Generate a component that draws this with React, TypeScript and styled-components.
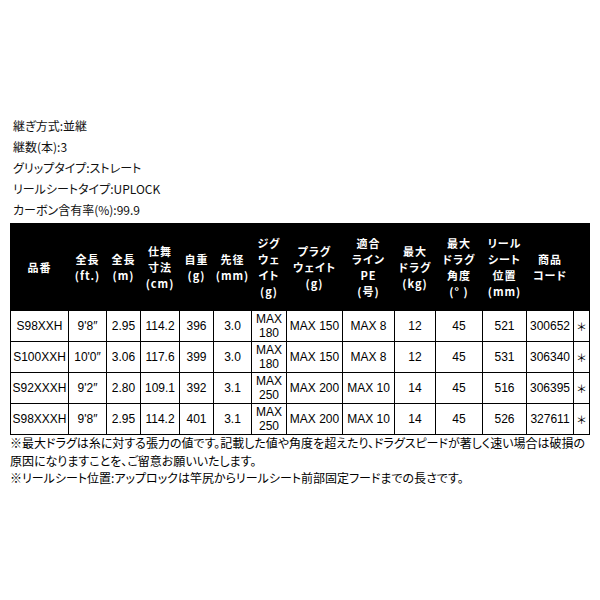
import React from "react";
import styled, { createGlobalStyle } from "styled-components";

const GlobalStyle = createGlobalStyle`
  html, body { margin: 0; padding: 0; background: #ffffff; }
  body { font-family: "Noto Sans CJK JP", "Liberation Sans", sans-serif; color: #000; }
`;

const Page = styled.div`
  width: 600px;
  height: 600px;
  box-sizing: border-box;
  padding: 115px 11px 0 10px;
  display: flex;
  flex-direction: column;
`;

const SpecList = styled.div`
  display: flex;
  flex-direction: column;
  padding-left: 3px;
  margin-bottom: 3px;
`;

const SpecLine = styled.div`
  font-size: 12px;
  line-height: 21px;
  height: 21px;
  color: #111;
  font-feature-settings: "palt";
  white-space: nowrap;
`;

const Table = styled.table`
  border-collapse: collapse;
  table-layout: fixed;
  width: 579px;
`;

const HeadCell = styled.th`
  background: #000;
  color: #fff;
  border: 1px solid #000;
  height: 86px;
  padding: 0;
  font-size: 11px;
  font-weight: 700;
  line-height: 16px;
  letter-spacing: 1px;
  text-align: center;
  vertical-align: middle;
  font-feature-settings: "palt";
`;

const BodyRow = styled.tr`
  height: 31px;
`;

const Cell = styled.td<{ $star?: boolean }>`
  border: 1px solid #000;
  padding: 0;
  font-family: ${(p) =>
    p.$star ? '"Noto Sans CJK JP", sans-serif' : '"Liberation Sans", Arial, sans-serif'};
  font-size: ${(p) => (p.$star ? "11px" : "12px")};
  line-height: ${(p) => (p.$star ? "16px" : "14px")};
  text-align: center;
  vertical-align: middle;
  white-space: normal;
  color: #000;
`;

const Notes = styled.div`
  display: flex;
  flex-direction: column;
  margin-top: -1px;
`;

const NoteLine = styled.div`
  font-size: 12px;
  line-height: 17.5px;
  height: 17.5px;
  white-space: nowrap;
  font-feature-settings: "palt";
  color: #000;
`;

const cols = [58, 38, 34, 39, 34, 38, 35, 56, 52, 41, 47, 44, 47, 16];

const headers: string[][] = [
  ["品番"],
  ["全長", "(ft.)"],
  ["全長", "(m)"],
  ["仕舞", "寸法", "(cm)"],
  ["自重", "(g)"],
  ["先径", "(mm)"],
  ["ジグ", "ウェ", "イト", "(g)"],
  ["プラグ", "ウェイト", "(g)"],
  ["適合", "ライン", "PE", "(号)"],
  ["最大", "ドラグ", "(kg)"],
  ["最大", "ドラグ", "角度", "(° )"],
  ["リール", "シート", "位置", "(mm)"],
  ["商品", "コード"],
  [],
];

const rows: string[][] = [
  ["S98XXH", "9'8″", "2.95", "114.2", "396", "3.0", "MAX 180", "MAX 150", "MAX 8", "12", "45", "521", "300652", "＊"],
  ["S100XXH", "10'0″", "3.06", "117.6", "399", "3.0", "MAX 180", "MAX 150", "MAX 8", "12", "45", "531", "306340", "＊"],
  ["S92XXXH", "9'2″", "2.80", "109.1", "392", "3.1", "MAX 250", "MAX 200", "MAX 10", "14", "45", "516", "306395", "＊"],
  ["S98XXXH", "9'8″", "2.95", "114.2", "401", "3.1", "MAX 250", "MAX 200", "MAX 10", "14", "45", "526", "327611", "＊"],
];

const specs = [
  "継ぎ方式:並継",
  "継数(本):3",
  "グリップタイプ:ストレート",
  "リールシートタイプ:UPLOCK",
  "カーボン含有率(%):99.9",
];

const notes = [
  "※最大ドラグは糸に対する張力の値です。記載した値や角度を超えたり、ドラグスピードが著しく速い場合は破損の",
  "原因になりますことを、ご留意お願いいたします。",
  "※リールシート位置:アップロックは竿尻からリールシート前部固定フードまでの長さです。",
];

export default function App() {
  return (
    <>
      <GlobalStyle />
      <Page>
        <SpecList>
          {specs.map((s) => (
            <SpecLine key={s}>{s}</SpecLine>
          ))}
        </SpecList>
        <Table>
          <colgroup>
            {cols.map((w, i) => (
              <col key={i} style={{ width: w }} />
            ))}
          </colgroup>
          <thead>
            <tr>
              {headers.map((h, i) => (
                <HeadCell key={i}>
                  {h.map((line, j) => (
                    <React.Fragment key={j}>
                      {j > 0 && <br />}
                      {line}
                    </React.Fragment>
                  ))}
                </HeadCell>
              ))}
            </tr>
          </thead>
          <tbody>
            {rows.map((r, i) => (
              <BodyRow key={i}>
                {r.map((c, j) => (
                  <Cell key={j} $star={j === 13}>
                    {c}
                  </Cell>
                ))}
              </BodyRow>
            ))}
          </tbody>
        </Table>
        <Notes>
          {notes.map((n) => (
            <NoteLine key={n}>{n}</NoteLine>
          ))}
        </Notes>
      </Page>
    </>
  );
}
